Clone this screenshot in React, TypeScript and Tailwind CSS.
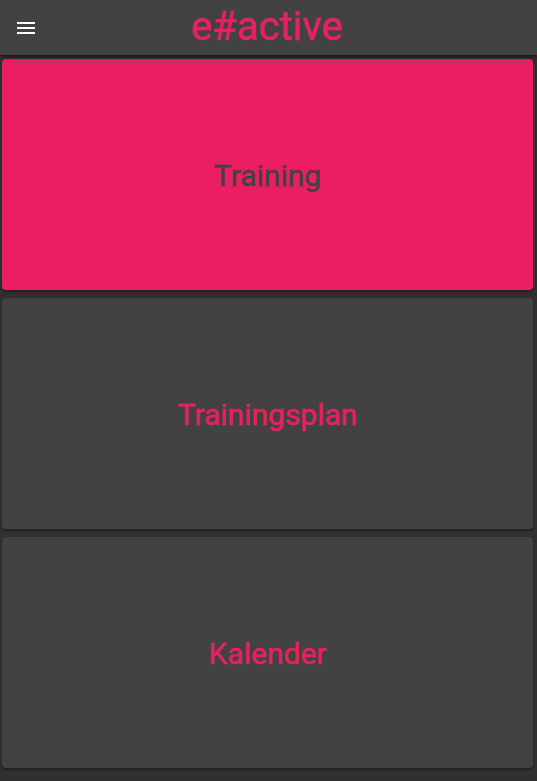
import React from "react";

const cards = [
  { label: "Training", active: true },
  { label: "Trainingsplan", active: false },
  { label: "Kalender", active: false },
];

const App: React.FC = () => {
  return (
    <div className="min-h-screen w-full bg-[#303030] font-['Roboto',sans-serif]">
      <header className="relative z-10 flex h-[55px] items-center bg-[#424242] shadow-[0_2px_4px_rgba(0,0,0,0.5)]">
        <button className="ml-[14px] flex h-6 w-6 items-center justify-center text-white">
          <svg width="24" height="24" viewBox="0 0 24 24" fill="currentColor">
            <path d="M3 18h18v-2H3v2zm0-5h18v-2H3v2zm0-7v2h18V6H3z" />
          </svg>
        </button>
        <h1 className="absolute left-[266.5px] top-[3px] -translate-x-1/2 text-[40px] leading-[48px] text-[#e91e63] [-webkit-text-stroke:0.4px_#e91e63]">
          e#active
        </h1>
      </header>
      <main className="flex flex-col gap-2 pl-[2px] pr-[4px] pt-1 pb-3">
        {cards.map((c) => (
          <div
            key={c.label}
            className={`flex h-[231px] items-center justify-center rounded-[4px] shadow-[0_2px_2px_rgba(0,0,0,0.3)] ${
              c.active
                ? "bg-[#e91e63] text-[#424242] [-webkit-text-stroke:0.4px_#424242]"
                : "bg-[#424242] text-[#e91e63] [-webkit-text-stroke:0.4px_#e91e63]"
            }`}
          >
            <span className="pt-[1px] text-[30px]">{c.label}</span>
          </div>
        ))}
      </main>
    </div>
  );
};

export default App;
